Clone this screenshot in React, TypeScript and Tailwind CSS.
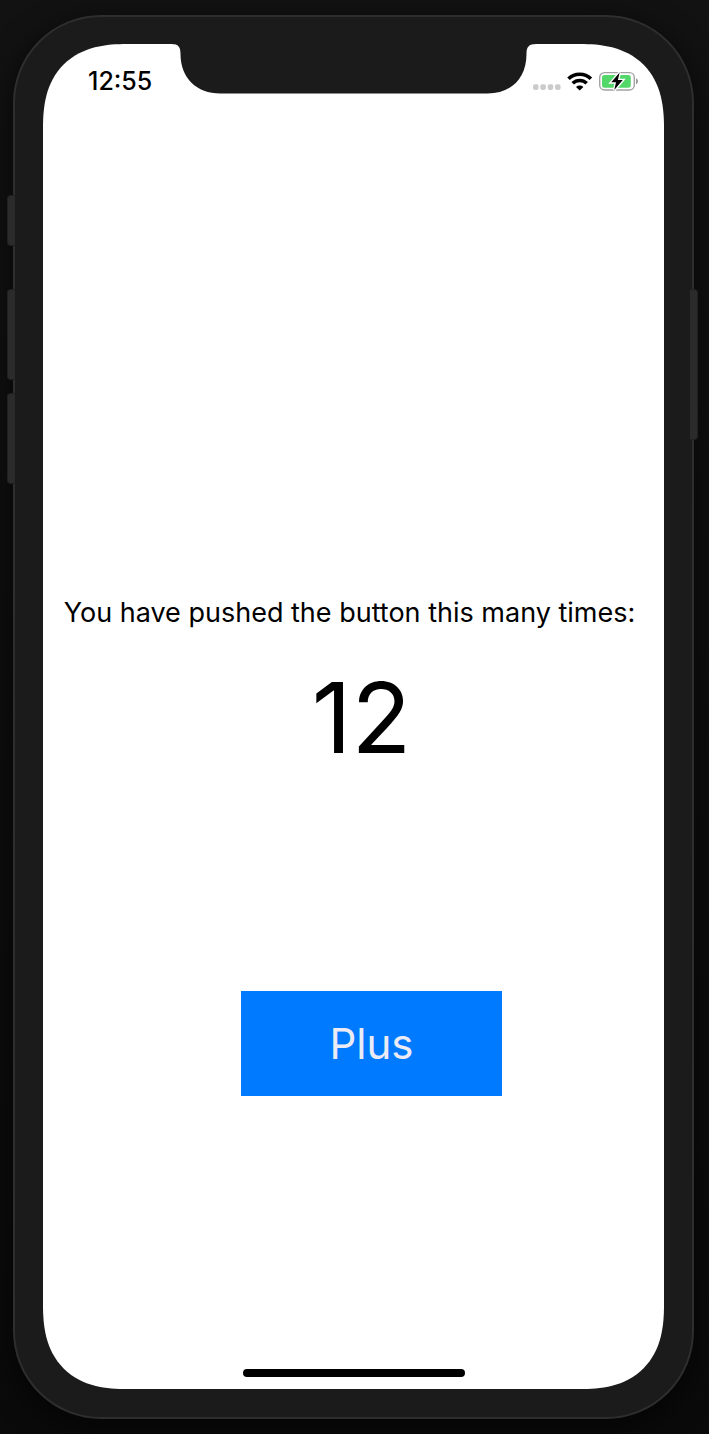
import { useState } from "react";

function Notch() {
  return (
    <svg
      className="absolute top-0 left-1/2 -translate-x-1/2"
      width="365"
      height="50"
      viewBox="0 0 365 50"
      aria-hidden="true"
    >
      <path
        d="M0 0C7 0 9 3 9 10C9 34 25 49.500 49 49.500H316C340 49.500 355 34 355 10C355 3 357 0 365 0Z"
        fill="#1b1b1b"
      />
    </svg>
  );
}

function StatusIcons() {
  return (
    <svg width="108" height="22" viewBox="0 0 108 22" role="img" aria-label="Signal, Wi-Fi and battery">
      <g fill="#cbcbcb">
        <rect x="1" y="14.300" width="5.600" height="5.600" rx="1.800" />
        <rect x="8.300" y="14.300" width="5.600" height="5.600" rx="1.800" />
        <rect x="15.700" y="14.300" width="5.600" height="5.600" rx="1.800" />
        <rect x="23" y="14.300" width="5.600" height="5.600" rx="1.800" />
      </g>
      <g fill="none" stroke="#000" strokeWidth="3.600">
        <path d="M36.500 8.800A16 16 0 0 1 58.900 8.800" />
        <path d="M40.700 13.300A10 10 0 0 1 54.700 13.300" />
      </g>
      <path d="M47.700 20.400L44 16.900A5.400 5.400 0 0 1 51.400 16.900Z" fill="#000" />
      <rect x="67.700" y="2.600" width="34.600" height="17.400" rx="4.800" fill="#fff" stroke="#a3a3a3" strokeWidth="1.400" />
      <rect x="70" y="4.900" width="28.800" height="12.800" rx="2.600" fill="#53d769" />
      <path d="M104 8.300C106.600 9.200 106.600 13.400 104 14.300Z" fill="#999" />
      <path
        d="M87.600 2.600L79.300 12.300H84L82.300 20L90.700 10.100H85.900Z"
        fill="#000"
        stroke="#fff"
        strokeWidth="2.800"
        paintOrder="stroke"
      />
    </svg>
  );
}

export default function App() {
  const [count, setCount] = useState(12);

  return (
    <div className="flex min-h-screen bg-linear-to-b from-[#121212] to-[#0a0a0a] pt-[15px] pr-[15px] pb-[15px] pl-[13px] font-['Inter','Liberation_Sans',sans-serif] text-black">
      <div className="relative flex grow rounded-[88px] border-2 border-[#2e2e2e] bg-[#1b1b1b] px-7 pt-[27px] pb-7 shadow-[0_8px_28px_4px_rgba(0,0,0,0.5)]">
        <span className="absolute top-[178px] -left-2 h-[51px] w-2 rounded-l-[4px] border border-r-0 border-[#202020] bg-[#2b2b2b]" />
        <span className="absolute top-[272px] -left-2 h-[91px] w-2 rounded-l-[4px] border border-r-0 border-[#202020] bg-[#2b2b2b]" />
        <span className="absolute top-[376px] -left-2 h-[91px] w-2 rounded-l-[4px] border border-r-0 border-[#202020] bg-[#2b2b2b]" />
        <span className="absolute top-[272px] -right-1.5 h-[151px] w-2 rounded-r-[4px] border border-l-0 border-[#202020] bg-[#2b2b2b]" />

        <div className="relative flex grow flex-col rounded-[68px] bg-white supports-[corner-shape:squircle]:rounded-[84px] supports-[corner-shape:squircle]:[corner-shape:superellipse(1.3)]">
          <Notch />
          <header className="flex items-center justify-between pt-[25px] pr-6 pl-[45px]">
            <time className="text-[25px] leading-6 font-medium">12:55</time>
            <StatusIcons />
          </header>

          <main className="flex grow flex-col items-center pt-[504px]">
            <p className="pr-2 text-[27px] leading-8 whitespace-nowrap">
              You have pushed the button this many times:
            </p>
            <output className="mt-10 pl-4 text-[98px] leading-[98px]">{count}</output>
            <button
              type="button"
              onClick={() => setCount(count + 1)}
              className="mt-56 ml-9 h-[105px] w-[261px] cursor-pointer bg-[#007aff] text-[42px] leading-none text-[#ebebf5]"
            >
              Plus
            </button>
          </main>

          <footer className="flex justify-center pb-3">
            <span className="h-2 w-[222px] rounded-full bg-black" />
          </footer>
        </div>
      </div>
    </div>
  );
}
